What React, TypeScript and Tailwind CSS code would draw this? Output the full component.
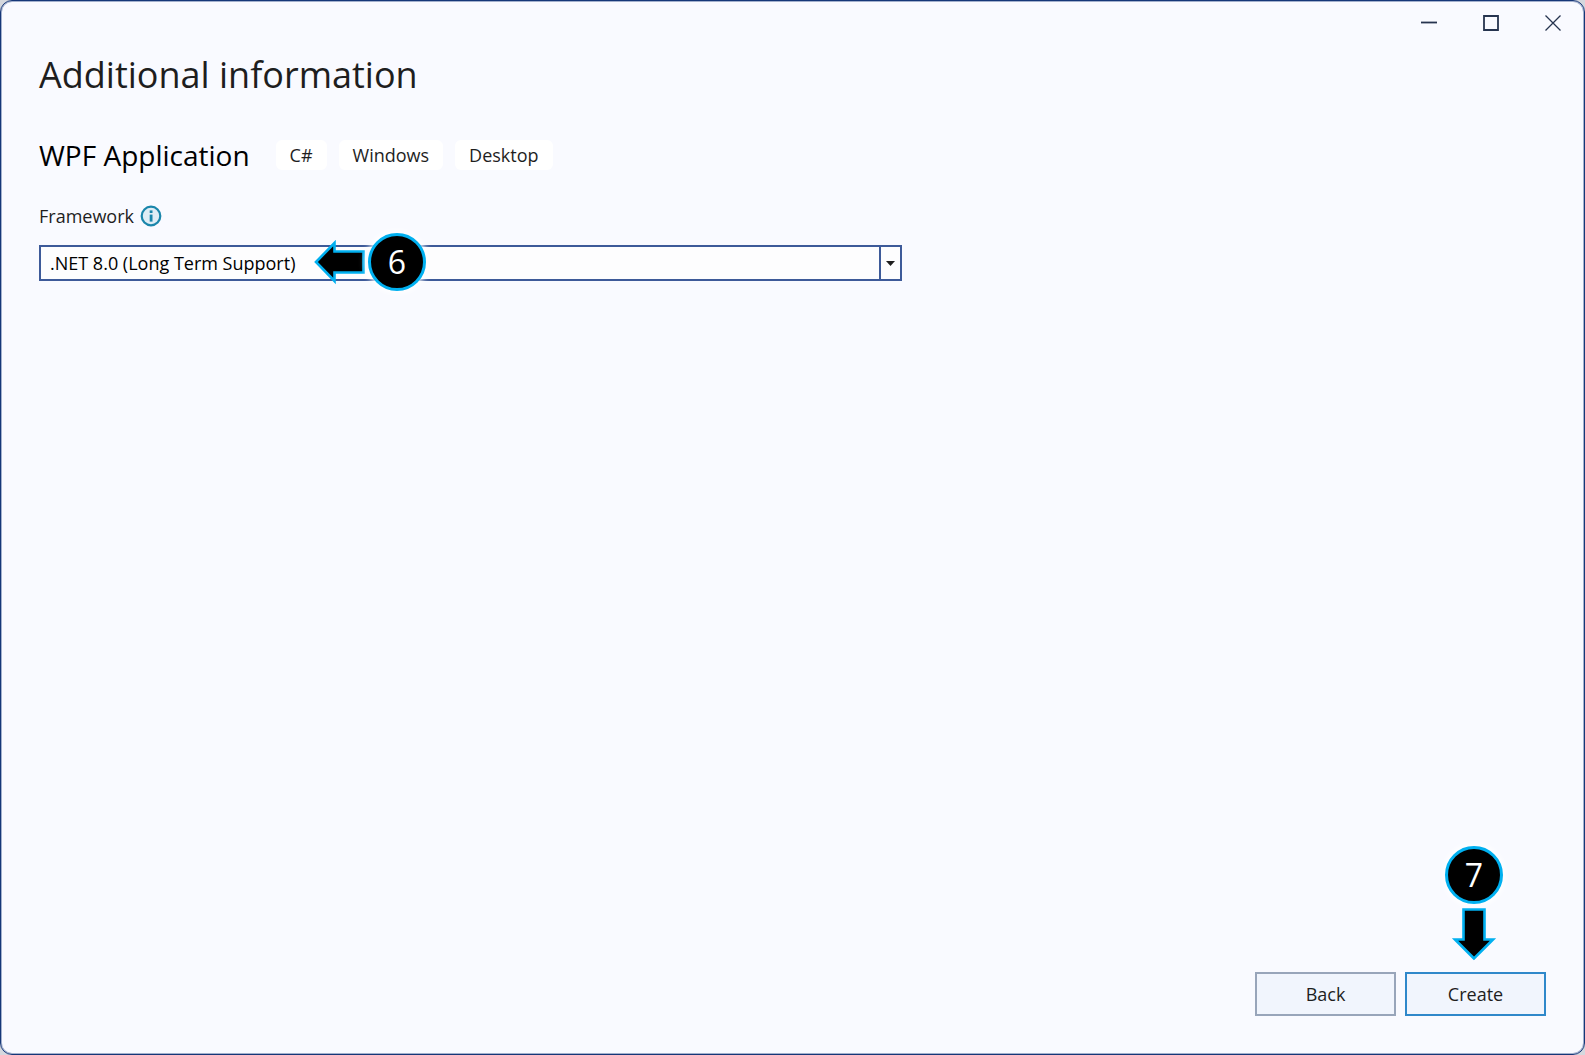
import React from 'react';

const tags = ['C#', 'Windows', 'Desktop'];

const InfoIcon: React.FC = () => (
  <svg width="22" height="22" viewBox="0 0 22 22" aria-hidden="true">
    <circle cx="11" cy="11" r="9.3" fill="#dfedf5" stroke="#1a86ab" strokeWidth="2.2" />
    <rect x="9.7" y="5.4" width="2.8" height="2.6" fill="#1a86ab" />
    <rect x="9.7" y="9.6" width="2.8" height="7" fill="#1a86ab" />
  </svg>
);

const StepBadge: React.FC<{ step: number }> = ({ step }) => (
  <div className="flex size-[58px] shrink-0 items-center justify-center rounded-full border-3 border-[#00b0f0] bg-black text-[32px] leading-none text-white shadow-[0_0_6px_2px_#fff]">
    {step}
  </div>
);

const WindowControls: React.FC = () => {
  const controls = [
    { label: 'Minimize', path: 'M0 7.5H16' },
    { label: 'Maximize', path: 'M1 1H15V15H1Z' },
    { label: 'Close', path: 'M0.5 0.5L15.5 15.5M15.5 0.5L0.5 15.5' },
  ];

  return (
    <div className="flex justify-end">
      {controls.map(control => (
        <button
          key={control.label}
          type="button"
          aria-label={control.label}
          className="flex h-11 w-[62px] items-center justify-center text-[#26344f] hover:bg-[#e6ebf7]"
        >
          <svg width="16" height="16" viewBox="0 0 16 16" fill="none" stroke="currentColor" strokeWidth={control.label === 'Close' ? 1.3 : 1.8}>
            <path d={control.path} />
          </svg>
        </button>
      ))}
    </div>
  );
};

export default function App() {
  return (
    <div className="min-h-screen bg-[#d5d8de] font-['Open_Sans','Noto_Sans',sans-serif] text-[#1e1e1e]">
      <div className="flex min-h-screen flex-col rounded-xl border border-[#163778] bg-[#f9faff] inset-ring inset-ring-[#a3b0cd]">
        <WindowControls />

        <main className="flex-1 px-[38px]">
          <h1 className="pt-1.5 text-[36px] leading-[48px]">Additional information</h1>

          <div className="mt-8 flex items-center gap-[26px]">
            <h2 className="text-[28px] leading-[48px] text-black">WPF Application</h2>
            <ul className="flex gap-3">
              {tags.map(tag => (
                <li key={tag} className="rounded-md bg-white px-3.5 text-[18px] leading-[30px]">
                  {tag}
                </li>
              ))}
            </ul>
          </div>

          <div className="mt-[22px] flex items-center gap-1.5">
            <label htmlFor="framework" className="text-[18px] leading-[30px]">Framework</label>
            <InfoIcon />
          </div>

          {/* Framework picker */}
          <div className="relative mt-3.5 w-full max-w-[863px]">
            <select
              id="framework"
              className="block h-9 w-full appearance-none border-2 border-[#3d5a99] bg-[#fdfdfe] pl-[9px] text-[18px] leading-[30px] text-black"
            >
              <option>.NET 8.0 (Long Term Support)</option>
            </select>
            <div className="pointer-events-none absolute inset-y-0 right-0 flex w-[23px] items-center justify-center border-2 border-[#3d5a99]">
              <svg width="9" height="5" viewBox="0 0 9 5" aria-hidden="true">
                <path d="M0 0H9L4.5 5Z" fill="#1e1e1e" />
              </svg>
            </div>
            <div className="pointer-events-none absolute bottom-[-10px] left-[275px] flex items-center gap-[3px]">
              <svg width="51" height="46" viewBox="0 0 51 46" aria-hidden="true">
                <path d="M2 23L20.5 4V12.5H49.5V33.5H20.5V42Z" fill="#000" stroke="#00b0f0" strokeWidth="2.6" />
              </svg>
              <StepBadge step={6} />
            </div>
          </div>
        </main>

        <footer className="flex justify-end gap-[9px] px-[38px] pb-[38px] text-[18px]">
          <button type="button" className="h-11 w-[141px] border-2 border-[#98a5ba] bg-[#f1f5fd]">
            Back
          </button>
          <div className="relative">
            <button type="button" className="h-11 w-[141px] border-2 border-[#2f88ca] bg-[#f1f5fd]">
              Create
            </button>
            <div className="pointer-events-none absolute right-[43px] bottom-full mb-[11px] flex flex-col items-center gap-1">
              <StepBadge step={7} />
              <svg width="46" height="53" viewBox="0 0 46 53" aria-hidden="true">
                <path d="M23 50.5L4 31.5H12.5V1.5H33.5V31.5H42Z" fill="#000" stroke="#00b0f0" strokeWidth="2.6" />
              </svg>
            </div>
          </div>
        </footer>
      </div>
    </div>
  );
}
